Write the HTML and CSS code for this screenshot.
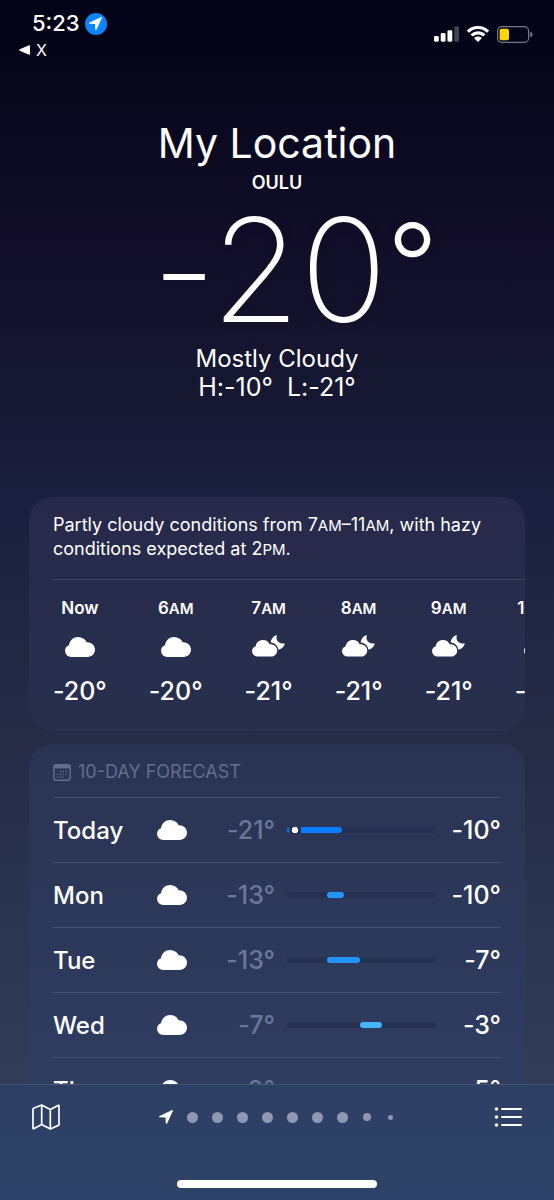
FILE: index.html
```html
<!DOCTYPE html>
<html lang="en">
<head>
<meta charset="utf-8">
<meta name="viewport" content="width=device-width, initial-scale=1">
<title>Weather</title>
<link rel="stylesheet" href="styles.css">
</head>
<body>
<svg class="sprite" aria-hidden="true">
  <symbol id="cloud" viewBox="0 0 30 20"><path d="M6.200 20A6.200 6.200 0 0 1 0 13.800C0 11 1.600 9 4 8.200C4.600 3.500 8.400 0 13.200 0C17 0 20.200 2.100 21.700 5.300C26.400 5.200 30 8.400 30 12.600C30 16.800 26.800 20 22.600 20Z"/></symbol>
  <symbol id="cloud-moon" viewBox="0 0 34 22"><path d="M5.500 21.500A5.400 5.400 0 0 1 0 16.200C0 13.700 1.500 11.800 3.700 11.200C4 7.600 7.100 5 11 5C14.100 5 16.500 6.600 17.700 9.200C21.900 9 25.200 11.800 25.200 15.400C25.200 18.900 22.500 21.500 19 21.500Z"/><path d="M18.600 7.200C19.100 4 21.200 1.400 24 .3C24.500 .1 25 .5 24.800 1C23.500 5 26.600 9.200 31.900 8.400C32.500 8.300 32.900 8.800 32.700 9.300C31.500 12.300 29.200 14.300 26.500 14.700C26 11 23.200 8.200 18.600 7.200Z"/></symbol>
  <symbol id="arrow" viewBox="0 0 14 14"><path d="M13.100.1.600 5.900C-.2 6.300 0 7.300.8 7.300L6.300 7.500C6.500 7.500 6.600 7.600 6.600 7.800L6.700 13.100C6.700 14 7.700 14.200 8.100 13.400L13.900 1C14.200.3 13.700-.2 13.100.1Z"/></symbol>
</svg>
<div class="app">
  <header class="status">
    <div class="status-left">
      <div class="clock">5:23 <span class="location"><svg><use href="#arrow"/></svg></span></div>
      <a class="back" href="#"><svg viewBox="0 0 11 10"><path d="M10 .2Q11 0 11 1V9Q11 10 10 9.800L.8 5.800Q-.3 5 .8 4.200Z"/></svg>X</a>
    </div>
    <div class="status-right">
      <svg class="signal" viewBox="0 0 26 16"><rect y="10" width="5" height="6" rx="1.400"/><rect x="7" y="7" width="5" height="9" rx="1.400"/><rect x="14" y="4" width="5" height="12" rx="1.400"/><rect x="21" width="5" height="16" rx="1.400" opacity=".25"/></svg>
      <svg class="wifi" viewBox="0 0 22 16"><path d="M11 0C15.200 0 19 1.600 21.800 4.200Q22.200 4.600 21.800 5L20.300 6.500Q20 6.800 19.600 6.400A12.600 12.600 0 0 0 2.400 6.400Q2 6.800 1.700 6.500L.2 5Q-.2 4.600.2 4.200A15.800 15.800 0 0 1 11 0Z"/><path d="M11 5.200C13.800 5.200 16.200 6.200 18.100 7.900Q18.500 8.300 18.100 8.700L16.500 10.200Q16.200 10.500 15.800 10.200A7.300 7.300 0 0 0 6.200 10.200Q5.800 10.500 5.500 10.200L3.900 8.700Q3.500 8.300 3.900 7.900A10.500 10.500 0 0 1 11 5.200Z"/><path d="M11 10.400C12.400 10.400 13.500 10.800 14.500 11.600Q14.900 12 14.500 12.400L11.500 15.400Q11 15.900 10.500 15.400L7.500 12.400Q7.100 12 7.500 11.600A5.600 5.600 0 0 1 11 10.400Z"/></svg>
      <svg class="battery" viewBox="0 0 36 17"><rect x=".6" y=".6" width="31" height="15.800" rx="4.200" fill="none" stroke="#77788a" stroke-width="1.200"/><rect x="2.600" y="2.800" width="9.400" height="11.400" rx="2" fill="#ffd60a"/><path d="M33.200 5.700Q35.600 6.300 35.600 8.500T33.200 11.300Z" fill="#77788a"/></svg>
    </div>
  </header>

  <main class="content">
    <section class="hero">
      <h1 class="place">My Location</h1>
      <p class="city">OULU</p>
      <p class="temperature">-20<span class="degree">°</span></p>
      <p class="condition">Mostly Cloudy</p>
      <p class="range"><span>H:-10°</span><span>L:-21°</span></p>
    </section>

    <section class="card hourly">
      <p class="summary">Partly cloudy conditions from 7<small>AM</small>–11<small>AM</small>, with hazy conditions expected at 2<small>PM</small>.</p>
      <ul class="hours">
        <li class="hour"><span class="time">Now</span><svg class="cloud"><use href="#cloud"/></svg><span class="degrees">-20°</span></li>
        <li class="hour"><span class="time">6<small>AM</small></span><svg class="cloud"><use href="#cloud"/></svg><span class="degrees">-20°</span></li>
        <li class="hour"><span class="time">7<small>AM</small></span><svg class="cloud-moon"><use href="#cloud-moon"/></svg><span class="degrees">-21°</span></li>
        <li class="hour"><span class="time">8<small>AM</small></span><svg class="cloud-moon"><use href="#cloud-moon"/></svg><span class="degrees">-21°</span></li>
        <li class="hour"><span class="time">9<small>AM</small></span><svg class="cloud-moon"><use href="#cloud-moon"/></svg><span class="degrees">-21°</span></li>
        <li class="hour"><span class="time">10<small>AM</small></span><svg class="cloud"><use href="#cloud"/></svg><span class="degrees">-21°</span></li>
      </ul>
    </section>

    <section class="card daily">
      <h2 class="card-title"><svg viewBox="0 0 18 17"><rect x=".8" y=".8" width="16.400" height="15.400" rx="2.500" fill="none" stroke="currentColor" stroke-width="1.500"/><path d="M1 1H17V4.500H1Z" fill="currentColor"/><path d="M7 7.500H15M4 10.300H15M4 13.100H12" stroke="currentColor" stroke-width="1.300" stroke-dasharray="1.300 1.400"/></svg>10-DAY FORECAST</h2>
      <ul class="days">
        <li class="day"><span class="name">Today</span><svg class="cloud"><use href="#cloud"/></svg><span class="low">-21°</span><span class="track"><span class="span span-today" style="margin-left:0%;width:37%"><span class="now"></span></span></span><span class="high">-10°</span></li>
        <li class="day"><span class="name">Mon</span><svg class="cloud"><use href="#cloud"/></svg><span class="low">-13°</span><span class="track"><span class="span span-cold" style="margin-left:27%;width:11%"></span></span><span class="high">-10°</span></li>
        <li class="day"><span class="name">Tue</span><svg class="cloud"><use href="#cloud"/></svg><span class="low">-13°</span><span class="track"><span class="span span-cold" style="margin-left:27%;width:22%"></span></span><span class="high">-7°</span></li>
        <li class="day"><span class="name">Wed</span><svg class="cloud"><use href="#cloud"/></svg><span class="low">-7°</span><span class="track"><span class="span span-cool" style="margin-left:49%;width:15%"></span></span><span class="high">-3°</span></li>
        <li class="day"><span class="name">Thu</span><svg class="cloud"><use href="#cloud"/></svg><span class="low">-9°</span><span class="track"><span class="span span-cool" style="margin-left:42%;width:15%"></span></span><span class="high">-5°</span></li>
      </ul>
    </section>
  </main>

  <footer class="toolbar">
    <nav class="actions">
      <button class="action" type="button" aria-label="Map"><svg viewBox="0 0 28 26"><path d="M1 5.200Q1 4.500 1.600 4.200L9.700 1 18.300 5.500 26 1.400Q27 1 27 2V20.400Q27 21 26.400 21.400L18.300 25 9.700 20.500 2 24.600Q1 25 1 24ZM9.700 1V20.500M18.300 5.500V25" fill="none" stroke="currentColor" stroke-width="1.700" stroke-linejoin="round"/></svg></button>
      <div class="pages">
        <svg class="current"><use href="#arrow"/></svg>
        <span class="dot"></span><span class="dot"></span><span class="dot"></span><span class="dot"></span><span class="dot"></span><span class="dot"></span><span class="dot"></span><span class="dot dot-small"></span><span class="dot dot-tiny"></span>
      </div>
      <button class="action" type="button" aria-label="Locations"><svg viewBox="0 0 28 26"><path d="M8 5H27M8 13H27M8 21H27" stroke="currentColor" stroke-width="2" stroke-linecap="round"/><g fill="currentColor"><circle cx="2.500" cy="5" r="1.700"/><circle cx="2.500" cy="13" r="1.700"/><circle cx="2.500" cy="21" r="1.700"/></g></svg></button>
    </nav>
    <div class="home-indicator"></div>
  </footer>
</div>
</body>
</html>
```
FILE: styles.css
```css
* { box-sizing: border-box; }

body {
  margin: 0;
  background: #161832;
  color: #fff;
  font-family: Inter, "Liberation Sans", sans-serif;
  font-size: 25px;
  line-height: 29px;
}

h1, h2, p, ul { margin: 0; padding: 0; font-weight: 400; }
ul { list-style: none; }
svg { display: block; fill: #fff; }
button { padding: 0; border: 0; background: none; color: #fff; }
small { font-size: 15px; line-height: 1; }

.sprite { position: absolute; width: 0; height: 0; }

.app {
  display: flex;
  flex-direction: column;
  height: 100vh;
  overflow: hidden;
  background: linear-gradient(#020316 0%, #08071c 8%, #120e29 20%, #161832 33%, #1b2040 42%, #262b46 62%, #2a3450 75%, #313c58 90%);
}

.status {
  display: flex;
  justify-content: space-between;
  padding: 10px 21px 0 19px;
}
.clock {
  display: flex;
  align-items: center;
  gap: 5px;
  padding-left: 13px;
  font-size: 22px;
  font-weight: 500;
  line-height: 27px;
}
.location {
  display: grid;
  place-items: center;
  width: 22px;
  height: 22px;
  border-radius: 50%;
  background: #0a84ff;
}
.location svg { width: 13px; height: 13px; }
.back {
  display: flex;
  align-items: center;
  gap: 6px;
  color: #fff;
  font-size: 16px;
  line-height: 26px;
  text-decoration: none;
}
.back svg { width: 11px; height: 10px; }
.status-right {
  display: flex;
  align-items: flex-start;
  gap: 8px;
  padding-top: 16px;
}
.signal { width: 25px; height: 16px; }
.wifi { width: 22px; height: 16px; }
.battery { width: 36px; height: 17px; }

.content {
  flex: 1;
  min-height: 0;
  padding: 54px 29px 0 29px;
  overflow: hidden;
}

.hero {
  display: flex;
  flex-direction: column;
  align-items: center;
  height: 380px;
}
.place { font-size: 41px; line-height: 52px; }
.city { font-size: 18px; font-weight: 600; line-height: 27px; }
.temperature {
  padding-left: 36px;
  font-size: 144px;
  font-weight: 200;
  line-height: 148px;
  text-shadow: 0 0 12px rgba(0, 0, 0, .15);
}
.temperature, .range, .degrees, .day { font-variant-ligatures: no-contextual; }
.degree {
  font-size: 112px;
  font-weight: 300;
  line-height: 1;
  vertical-align: 18px;
}
.condition { font-size: 24px; }
.range { display: flex; gap: 14px; }

.card {
  overflow: hidden;
  border-radius: 24px;
}
.hourly {
  margin-bottom: 13px;
  padding: 16px 0 25px 24px;
  background: linear-gradient(#27294a, #28304e);
}
.summary {
  padding: 0 40px 18px 0;
  border-bottom: 1px solid #42455f;
  font-size: 18px;
  line-height: 24px;
}
.hours {
  display: flex;
  gap: 42px;
  padding-top: 16px;
}
.hour {
  display: flex;
  flex: none;
  flex-direction: column;
  align-items: center;
}
.time { font-size: 17px; font-weight: 600; line-height: 24px; }
.hour .cloud { margin: 17px 0 19px; }
.cloud { width: 30px; height: 20px; }
.hour .cloud-moon { width: 34px; height: 22px; margin: 15px 0 19px; }
.degrees { line-height: 30px; }
.degrees, .day { font-weight: 500; }

.daily {
  padding: 15px 24px 0;
  background: linear-gradient(#2a3353, #2f3e62);
}
.card-title {
  display: flex;
  align-items: center;
  gap: 7px;
  padding-bottom: 12px;
  color: #656c8c;
  font-size: 18px;
  line-height: 26px;
}
.card-title svg { width: 18px; height: 17px; }
.day {
  display: grid;
  grid-template-columns: 104px 30px 88px 1fr 65px;
  align-items: center;
  height: 65px;
  border-top: 1px solid #465270;
}
.name { font-size: 24px; }
.low { color: #69779a; text-align: right; }
.high { text-align: right; }
.track {
  height: 6px;
  margin-left: 12px;
  border-radius: 3px;
  background: #253052;
}
.span { display: block; height: 6px; border-radius: 3px; }
.span-today { padding-left: 2px; background: #0a7cff; }
.span-cold { background: #2495fa; }
.span-cool { background: #48b5fb; }
.now {
  display: block;
  width: 12px;
  height: 6px;
  border: solid #2a3455;
  border-width: 0 3px;
  background: radial-gradient(circle, #fff 3px, #2a3455 3px);
}

.toolbar {
  display: flex;
  flex-direction: column;
  justify-content: space-between;
  align-items: center;
  height: 116px;
  padding: 18px 0 12px;
  border-top: 1px solid #465473;
  background: linear-gradient(#2e3f64, #2e4369);
}
.actions {
  display: flex;
  justify-content: space-between;
  align-items: center;
  width: 100%;
  padding: 0 32px;
}
.action svg { width: 28px; height: 28px; }
.pages {
  display: flex;
  align-items: center;
  gap: 14px;
}
.current { width: 14px; height: 14px; }
.dot {
  width: 11px;
  height: 11px;
  border-radius: 50%;
  background: #8e98b0;
}
.dot-small { width: 8px; height: 8px; margin: 0 1px; }
.dot-tiny { width: 5px; height: 5px; margin: 0 2px; }
.home-indicator {
  width: 36%;
  height: 8px;
  border-radius: 4px;
  background: #fff;
}
```
